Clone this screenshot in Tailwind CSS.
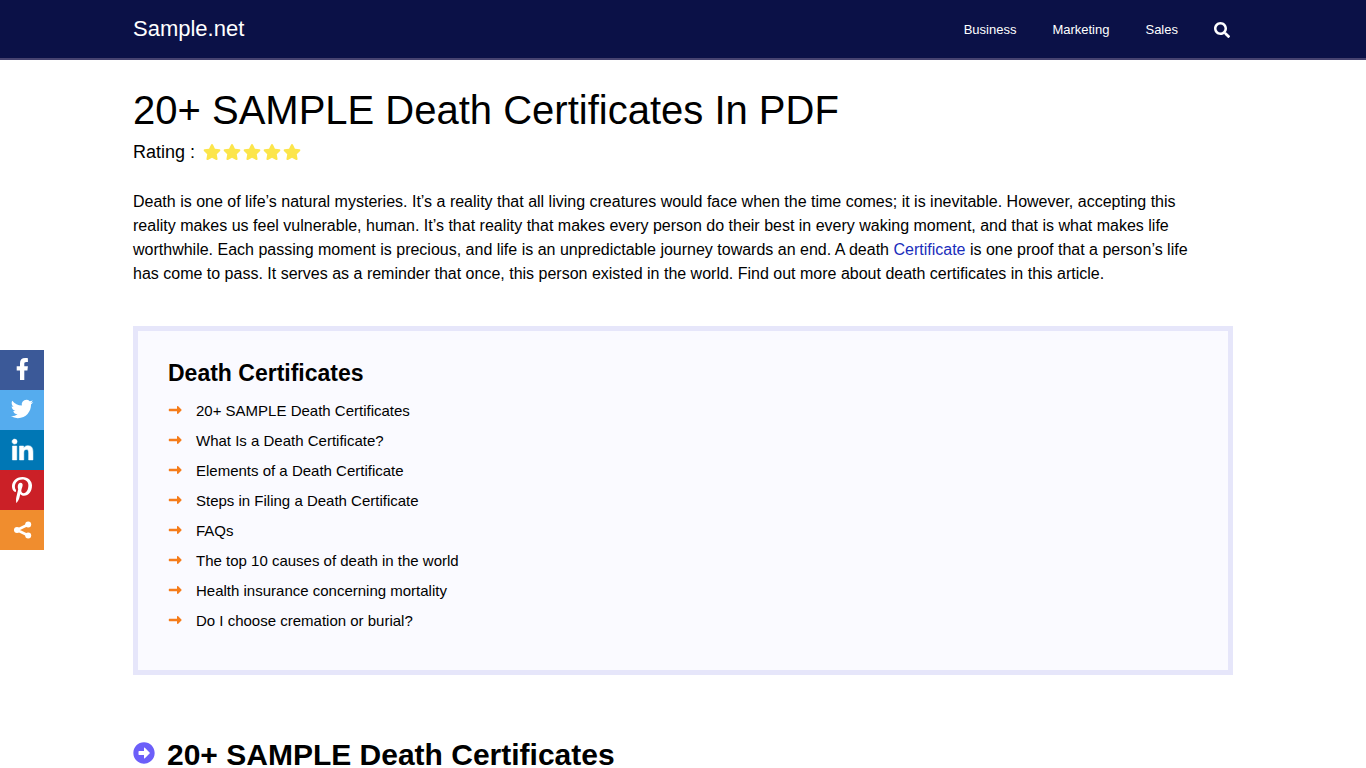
<!DOCTYPE html>
<html lang="en">
<head>
    <meta charset="UTF-8">
    <meta name="viewport" content="width=device-width, initial-scale=1.0">
    <title>20+ SAMPLE Death Certificates In PDF</title>
    <script src="https://cdn.jsdelivr.net/npm/@tailwindcss/browser@4"></script>
</head>
<body class="bg-white text-black font-['Liberation_Sans',Arial,sans-serif] overflow-x-hidden">
    <svg class="hidden">
        <symbol id="star" viewBox="0 0 576 512"><path d="M259.3 17.8L194 150.2 47.9 171.5c-26.2 3.8-36.7 36.1-17.7 54.6l105.7 103-25 145.5c-4.5 26.3 23.2 46 46.4 33.7L288 439.6l130.7 68.7c23.2 12.2 50.9-7.4 46.4-33.7l-25-145.5 105.7-103c19-18.5 8.5-50.8-17.7-54.6L382 150.2 316.7 17.8c-11.7-23.6-45.6-23.9-57.4 0z"/></symbol>
        <symbol id="arrow" viewBox="0 0 14 10"><path d="M1.300 3.800H9V1.800c0-.7.7-1 1.200-.5l3.200 3.100c.4.4.4.8 0 1.200l-3.200 3.100C9.700 9.200 9 8.900 9 8.200V6.200H1.300c-.3 0-.5-.2-.5-.5V4.300c0-.3.2-.5.5-.5z"/></symbol>
    </svg>

    <header class="bg-[#0b1147] border-b-2 border-[#474370]">
        <div class="max-w-[1100px] mx-auto h-[58px] flex items-center justify-between">
            <a href="#" class="text-white text-[22px] leading-7">Sample.net</a>
            <nav class="flex items-center gap-9 text-[13px] text-white pr-[3px] pt-[2px]">
                <a href="#">Business</a>
                <a href="#">Marketing</a>
                <a href="#">Sales</a>
                <button type="button" aria-label="Search">
                    <svg class="size-4 fill-white" viewBox="0 0 512 512"><path d="M505 442.7L405.3 343c-4.500-4.500-10.600-7-17-7H372c27.600-35.300 44-79.700 44-128C416 93.100 322.900 0 208 0S0 93.100 0 208s93.100 208 208 208c48.300 0 92.700-16.400 128-44v16.300c0 6.400 2.500 12.500 7 17l99.700 99.700c9.400 9.400 24.600 9.400 33.900 0l28.300-28.300c9.400-9.400 9.400-24.600.1-34zM208 336c-70.700 0-128-57.200-128-128 0-70.700 57.200-128 128-128 70.700 0 128 57.200 128 128 0 70.700-57.200 128-128 128z"/></svg>
                </button>
            </nav>
        </div>
    </header>

    <main class="max-w-[1100px] mx-auto pt-6">
        <h1 class="text-[40px] leading-[52px]">20+ SAMPLE Death Certificates In PDF</h1>
        <div class="flex items-center text-lg leading-8">
            <span>Rating :</span>
            <span class="flex gap-[2px] ml-2 fill-[#fce54b]" role="img" aria-label="5 stars">
                <svg class="w-[18px] h-4"><use href="#star"/></svg>
                <svg class="w-[18px] h-4"><use href="#star"/></svg>
                <svg class="w-[18px] h-4"><use href="#star"/></svg>
                <svg class="w-[18px] h-4"><use href="#star"/></svg>
                <svg class="w-[18px] h-4"><use href="#star"/></svg>
            </span>
        </div>

        <p class="mt-[22px] text-base leading-6">Death is one of life’s natural mysteries. It’s a reality that all living creatures would face when the time comes; it is inevitable. However, accepting this <br>reality makes us feel vulnerable, human. It’s that reality that makes every person do their best in every waking moment, and that is what makes life <br>worthwhile. Each passing moment is precious, and life is an unpredictable journey towards an end. A death <a href="#" class="text-[#1a2dbb]">Certificate</a> is one proof that a person’s life <br>has come to pass. It serves as a reminder that once, this person existed in the world. Find out more about death certificates in this article.</p>

        <section class="mt-10 border-[5px] border-[#e6e6fa] bg-[#fafaff] px-[30px] pt-[27px] pb-[34px]">
            <h2 class="text-[23px] leading-[30px] font-bold mb-2">Death Certificates</h2>
            <ul class="text-[15px] leading-[30px]">
                <li class="flex items-center gap-[14px]"><svg class="w-[14px] h-[10px] mb-[2px] fill-[#f57c1a]"><use href="#arrow"/></svg><a href="#">20+ SAMPLE Death Certificates</a></li>
                <li class="flex items-center gap-[14px]"><svg class="w-[14px] h-[10px] mb-[2px] fill-[#f57c1a]"><use href="#arrow"/></svg><a href="#">What Is a Death Certificate?</a></li>
                <li class="flex items-center gap-[14px]"><svg class="w-[14px] h-[10px] mb-[2px] fill-[#f57c1a]"><use href="#arrow"/></svg><a href="#">Elements of a Death Certificate</a></li>
                <li class="flex items-center gap-[14px]"><svg class="w-[14px] h-[10px] mb-[2px] fill-[#f57c1a]"><use href="#arrow"/></svg><a href="#">Steps in Filing a Death Certificate</a></li>
                <li class="flex items-center gap-[14px]"><svg class="w-[14px] h-[10px] mb-[2px] fill-[#f57c1a]"><use href="#arrow"/></svg><a href="#">FAQs</a></li>
                <li class="flex items-center gap-[14px]"><svg class="w-[14px] h-[10px] mb-[2px] fill-[#f57c1a]"><use href="#arrow"/></svg><a href="#">The top 10 causes of death in the world</a></li>
                <li class="flex items-center gap-[14px]"><svg class="w-[14px] h-[10px] mb-[2px] fill-[#f57c1a]"><use href="#arrow"/></svg><a href="#">Health insurance concerning mortality</a></li>
                <li class="flex items-center gap-[14px]"><svg class="w-[14px] h-[10px] mb-[2px] fill-[#f57c1a]"><use href="#arrow"/></svg><a href="#">Do I choose cremation or burial?</a></li>
            </ul>
        </section>

        <h2 class="mt-[60px] flex items-center gap-3 text-[30px] leading-10 font-bold">
            <svg class="size-[22px] mb-1 fill-[#6c5ff9]" viewBox="0 0 512 512"><path d="M256 8c137 0 248 111 248 248S393 504 256 504 8 393 8 256 119 8 256 8zM140 300h116v70.900c0 10.700 13 16.100 20.500 8.500l114.300-114.900c4.700-4.700 4.700-12.200 0-16.900l-114.300-115c-7.600-7.600-20.500-2.200-20.500 8.500V212H140c-6.600 0-12 5.400-12 12v64c0 6.600 5.400 12 12 12z"/></svg>
            20+ SAMPLE Death Certificates
        </h2>
    </main>

    <!-- share bar -->
    <aside class="fixed left-0 top-[350px] w-11 flex flex-col">
        <a href="#" aria-label="Facebook" class="h-10 flex items-center justify-center bg-[#3b5998]">
            <svg class="size-8 mb-[2px] fill-white" viewBox="0 0 32 32"><path d="M18.300 27V17.400h3.100l.5-4.200h-3.600v-2.200c0-1.200.4-1.900 2-1.900h1.600V5.200c-.5-.1-1.500-.2-2.700-.2-3.400 0-5.200 1.900-5.200 5.300v2.900h-3.300v4.200H14V27h4.300z"/></svg>
        </a>
        <a href="#" aria-label="Twitter" class="h-10 flex items-center justify-center bg-[#55acee]">
            <svg class="size-8 mb-[2px] fill-white" viewBox="-1 -1 34 34"><path d="M28 8.557a9.913 9.913 0 0 1-2.828.775 4.930 4.930 0 0 0 2.166-2.725 9.738 9.738 0 0 1-3.130 1.194 4.920 4.920 0 0 0-3.593-1.550 4.924 4.924 0 0 0-4.794 6.049c-4.090-.21-7.720-2.170-10.150-5.150a4.942 4.942 0 0 0-.665 2.477c0 1.710.87 3.214 2.190 4.100a4.968 4.968 0 0 1-2.230-.616v.06c0 2.390 1.700 4.380 3.952 4.830-.414.115-.85.174-1.297.174-.318 0-.626-.03-.928-.086a4.935 4.935 0 0 0 4.600 3.420 9.893 9.893 0 0 1-6.114 2.107c-.398 0-.79-.023-1.175-.068a13.953 13.953 0 0 0 7.550 2.213c9.056 0 14.010-7.507 14.010-14.013 0-.213-.005-.426-.015-.637.96-.695 1.795-1.560 2.455-2.550z"/></svg>
        </a>
        <a href="#" aria-label="LinkedIn" class="h-10 flex items-center justify-center bg-[#0077b5]">
            <svg class="size-8 mb-[2px] fill-white stroke-white" stroke-width=".5" viewBox="0 0 31 31"><path d="M6.227 12.610h4.190v13.480h-4.190V12.610zm2.095-6.700a2.430 2.430 0 0 1 0 4.860c-1.344 0-2.428-1.090-2.428-2.430s1.084-2.430 2.428-2.430m4.720 6.700h4.020v1.840h.058c.56-1.058 1.927-2.176 3.965-2.176 4.238 0 5.020 2.792 5.020 6.420v7.395h-4.183v-6.560c0-1.564-.03-3.574-2.178-3.574-2.180 0-2.514 1.700-2.514 3.460v6.668h-4.187V12.610z"/></svg>
        </a>
        <a href="#" aria-label="Pinterest" class="h-10 flex items-center justify-center bg-[#cb2027]">
            <svg class="size-9 fill-white" viewBox="0 0 32 32"><path d="M16.539 4.5c-6.277 0-9.442 4.5-9.442 8.253 0 2.272.86 4.293 2.705 5.046.303.125.574.005.662-.33.061-.231.205-.816.27-1.060.088-.331.053-.447-.191-.736-.532-.627-.873-1.439-.873-2.591 0-3.338 2.498-6.327 6.505-6.327 3.548 0 5.497 2.168 5.497 5.062 0 3.810-1.686 7.025-4.188 7.025-1.382 0-2.416-1.142-2.085-2.545.397-1.674 1.166-3.480 1.166-4.689 0-1.081-.581-1.983-1.782-1.983-1.413 0-2.548 1.462-2.548 3.419 0 1.247.421 2.091.421 2.091l-1.699 7.199c-.505 2.137-.076 4.755-.039 5.019.021.158.223.196.314.077.13-.17 1.813-2.247 2.384-4.324.162-.587.929-3.631.929-3.631.46.876 1.801 1.646 3.227 1.646 4.247 0 7.128-3.871 7.128-9.053.003-3.918-3.317-7.568-8.361-7.568z"/></svg>
        </a>
        <a href="#" aria-label="Share" class="h-10 flex items-center justify-center bg-[#f08d2e]">
            <svg class="size-8 fill-white" viewBox="0 0 32 32"><path d="M22.200 10.500L11 16l11.200 5.500" fill="none" stroke="#fff" stroke-width="2.600"/><circle cx="22.200" cy="10.500" r="3"/><circle cx="11" cy="16" r="3"/><circle cx="22.200" cy="21.500" r="3"/></svg>
        </a>
    </aside>
</body>
</html>
